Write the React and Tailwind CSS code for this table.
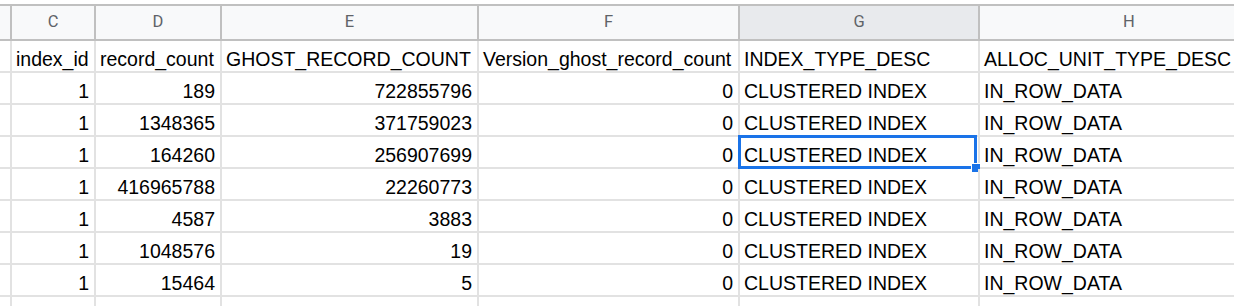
import React from 'react'

const cols = [
  { key: 'stub', w: 'w-[12px]' },
  { key: 'C', w: 'w-[84px]' },
  { key: 'D', w: 'w-[126px]' },
  { key: 'E', w: 'w-[257px]' },
  { key: 'F', w: 'w-[261px]' },
  { key: 'G', w: 'w-[240px]' },
  { key: 'H', w: 'w-[300px]' },
]

const names = ['index_id', 'record_count', 'GHOST_RECORD_COUNT', 'Version_ghost_record_count', 'INDEX_TYPE_DESC', 'ALLOC_UNIT_TYPE_DESC']

const rows = [
  [1, 189, 722855796, 0],
  [1, 1348365, 371759023, 0],
  [1, 164260, 256907699, 0],
  [1, 416965788, 22260773, 0],
  [1, 4587, 3883, 0],
  [1, 1048576, 19, 0],
  [1, 15464, 5, 0],
]

const Cell = ({ w, right, children, selected }) => (
  <div className={`${w} shrink-0 h-[32px] border-r-2 border-b-2 border-[#e2e2e2] relative flex items-end ${right ? 'justify-end pr-[5px]' : 'justify-start pl-[4px]'}`}>
    <span className="whitespace-nowrap leading-none pb-[2px]">{children}</span>
    {selected && (
      <div className="absolute -top-[2px] -left-[2px] right-[1px] bottom-[-2px] border-[3px] border-[#1a73e8]">
        <div className="absolute -right-[7px] -bottom-[7px] w-[10px] h-[10px] bg-[#1a73e8] border border-white" />
      </div>
    )}
  </div>
)

export default function App() {
  return (
    <div className="w-[1234px] h-[306px] overflow-hidden bg-white pt-[4px] text-black text-[19.5px]" style={{ fontFamily: '"Liberation Sans", Arial, sans-serif' }}>
      {/* column letters */}
      <div className="flex border-t-2 border-[#c0c0c0] text-[#5f6368] text-[16.5px]" style={{ fontFamily: 'Roboto, Arial, sans-serif' }}>
        {cols.map(c => (
          <div
            key={c.key}
            className={`${c.w} shrink-0 h-[35px] border-b-2 border-r-2 border-[#c0c0c0] flex items-center justify-center ${c.key === 'G' ? 'bg-[#e8eaed]' : 'bg-[#f8f9fa]'}`}
          >
            {c.key === 'stub' ? '' : c.key}
          </div>
        ))}
      </div>

      {/* header names row */}
      <div className="flex">
        <Cell w="w-[12px]" />
        {names.map((n, i) => (
          <Cell key={n} w={cols[i + 1].w}>{n}</Cell>
        ))}
      </div>

      {rows.map((r, ri) => (
        <div key={ri} className="flex">
          <Cell w="w-[12px]" />
          {r.map((v, i) => (
            <Cell key={i} w={cols[i + 1].w} right>{v}</Cell>
          ))}
          <Cell w="w-[240px]" selected={ri === 2}>CLUSTERED INDEX</Cell>
          <Cell w="w-[300px]">IN_ROW_DATA</Cell>
        </div>
      ))}

      <div className="flex">
        {cols.map(c => (
          <Cell key={c.key} w={c.w} />
        ))}
      </div>
    </div>
  )
}
